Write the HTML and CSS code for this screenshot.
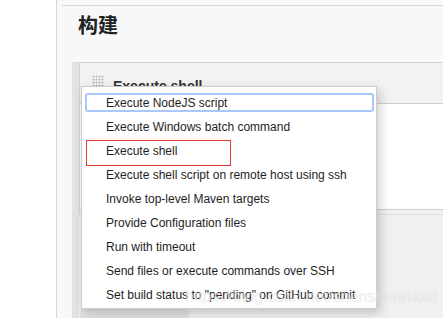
FILE: index.html
```html
<!DOCTYPE html>
<html lang="zh-CN">

<head>
    <meta charset="UTF-8">
    <title>构建</title>
    <link rel="stylesheet" href="styles.css">
</head>

<body>
    <div class="page">
        <div class="sidebar"></div>

        <div class="main">
            <div class="rule"></div>
            <h1 class="section-title">构建</h1>

            <div class="section">
                <div class="step">
                    <div class="step-head">
                        <span class="handle"></span>
                        <span class="step-name">Execute shell</span>
                    </div>
                    <div class="step-body"></div>
                    <div class="step-foot"></div>
                </div>
                <div class="add-btn"></div>
            </div>

            <ul class="menu">
                <li class="item focused">Execute NodeJS script</li>
                <li class="item">Execute Windows batch command</li>
                <li class="item marked">Execute shell</li>
                <li class="item">Execute shell script on remote host using ssh</li>
                <li class="item">Invoke top-level Maven targets</li>
                <li class="item">Provide Configuration files</li>
                <li class="item">Run with timeout</li>
                <li class="item">Send files or execute commands over SSH</li>
                <li class="item">Set build status to "pending" on GitHub commit</li>
            </ul>

            <div class="watermark">https://blog.csdn.net/shenshenruoxi</div>
        </div>
    </div>
</body>

</html>
```

FILE: styles.css
```css
* {
    margin: 0;
    padding: 0;
    box-sizing: border-box;
}

body {
    font-family: 'Liberation Sans', Arial, sans-serif;
    background: #fff;
    width: 443px;
    height: 318px;
    overflow: hidden;
}

.page {
    display: flex;
    height: 318px;
}

.sidebar {
    width: 57px;
    background: #fff;
    border-right: 1px solid #d6d6d6;
}

.main {
    flex: 1;
    position: relative;
    background: #f8f8f8;
    padding-top: 5px;
}

.rule {
    margin-left: 5px;
    border-top: 1px solid #d9d9d9;
}

.section-title {
    font-family: 'Noto Sans CJK SC', sans-serif;
    font-size: 20px;
    font-weight: 700;
    line-height: 24px;
    color: #222;
    margin: 7px 0 0 21px;
    height: 49px;
}

.section {
    margin-left: 15px;
    background: #f0f0f0;
    border-left: 7px solid #e3e3e3;
    height: 260px;
}

.step {
    border-left: 1px solid #d4d4d4;
    border-top: 1px solid #d4d4d4;
}

.step-head {
    display: flex;
    align-items: flex-start;
    height: 41px;
    padding: 12px 0 0 12px;
    background: #f2f2f2;
    border-bottom: 1px solid #cfcfcf;
}

.handle {
    width: 12px;
    height: 12px;
    background-image: radial-gradient(circle, #b8b8b8 0.8px, transparent 1.2px);
    background-size: 3px 3px;
}

.step-name {
    margin: 3px 0 0 9px;
    font-size: 14px;
    font-weight: 700;
    color: #333;
}

.step-body {
    height: 106px;
    background: #fff;
    border-bottom: 1px solid #cccccc;
}

.step-foot {
    height: 5px;
    border-bottom: 1px solid #e0e0e0;
}

.add-btn {
    margin: 94px 0 0 1px;
    width: 109px;
    height: 12px;
    background: #e2e2e2;
    border-radius: 3px;
}

.menu {
    position: absolute;
    left: 24px;
    top: 86px;
    width: 296px;
    list-style: none;
    background: #fff;
    border: 1px solid #cccccc;
    padding: 4px 2px 1px 3px;
    box-shadow: 3px 4px 10px rgba(0, 0, 0, 0.2);
}

.item {
    position: relative;
    height: 24px;
    line-height: 24px;
    padding-left: 21px;
    font-size: 12px;
    color: #1e1e1e;
    white-space: nowrap;
}

.focused::after {
    content: '';
    position: absolute;
    left: 0;
    right: 0;
    top: 2px;
    bottom: 3px;
    border: 2px solid #a8c8fb;
    border-radius: 3px;
}

.marked::after {
    content: '';
    position: absolute;
    left: 1px;
    top: 1px;
    width: 143px;
    height: 24px;
    border: 1px solid #e53935;
}

.watermark {
    position: absolute;
    left: 128px;
    top: 288px;
    font-size: 16px;
    color: rgba(255, 255, 255, 0.6);
    text-shadow: 0 0 1px rgba(0, 0, 0, 0.15);
    white-space: nowrap;
}
```
